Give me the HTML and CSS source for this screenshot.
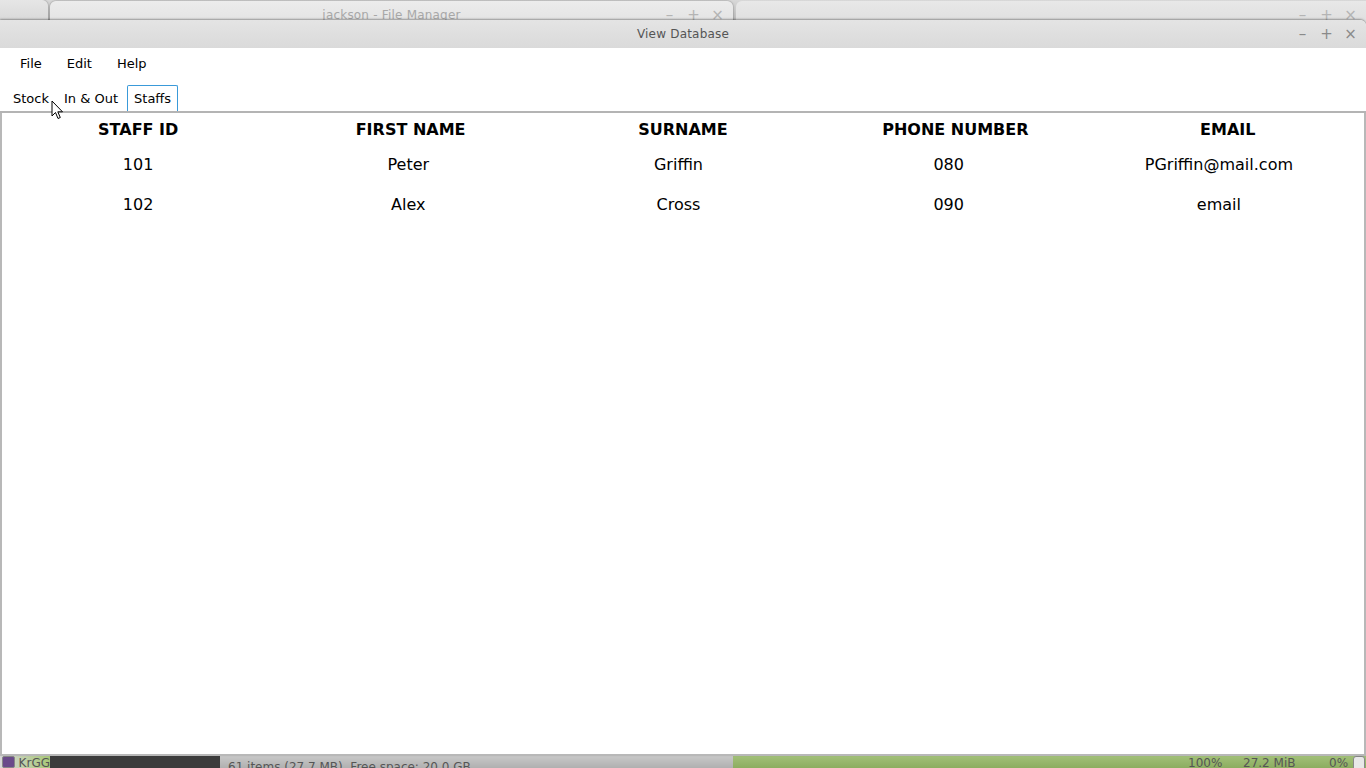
FILE: index.html
```html
<!DOCTYPE html>
<html>
<head>
<meta charset="utf-8">
<title>View Database</title>
<link rel="stylesheet" href="styles.css">
</head>
<body>
<div class="desktop">
  <div class="bgwin bgwin-left"></div>
  <div class="bgwin bgwin-fm">
    <div class="bg-title">jackson - File Manager</div>
    <div class="ctrls bg-ctrls"><span>&#8211;</span><span>+</span><span>&#215;</span></div>
  </div>
  <div class="bgwin bgwin-right">
    <div class="ctrls bg-ctrls"><span>&#8211;</span><span>+</span><span>&#215;</span></div>
  </div>

  <div class="bottom-strip">
    <div class="bs-a"><span class="bs-icon"></span><span class="bs-text">KrGG</span></div>
    <div class="bs-b"></div>
    <div class="bs-c"><span class="bs-text">61 items (27.7 MB), Free space: 20.0 GB</span></div>
    <div class="bs-d">
      <span class="bs-text bs-p1">100%</span>
      <span class="bs-text bs-p2">27.2 MiB</span>
      <span class="bs-text bs-p3">0%</span>
      <span class="bs-scroll"></span>
    </div>
  </div>

  <div class="window">
    <div class="titlebar">
      <div class="title">View Database</div>
      <div class="ctrls main-ctrls"><span>&#8211;</span><span>+</span><span>&#215;</span></div>
    </div>
    <div class="menubar">
      <span class="menu">File</span>
      <span class="menu">Edit</span>
      <span class="menu">Help</span>
    </div>
    <div class="tabs">
      <span class="tab">Stock</span>
      <span class="tab">In &amp; Out</span>
      <span class="tab active">Staffs</span>
    </div>
    <div class="content">
      <div class="thead">
        <div>STAFF ID</div>
        <div>FIRST NAME</div>
        <div>SURNAME</div>
        <div>PHONE NUMBER</div>
        <div>EMAIL</div>
      </div>
      <div class="trow">
        <div>101</div>
        <div>Peter</div>
        <div>Griffin</div>
        <div>080</div>
        <div>PGriffin@mail.com</div>
      </div>
      <div class="trow">
        <div>102</div>
        <div>Alex</div>
        <div>Cross</div>
        <div>090</div>
        <div>email</div>
      </div>
    </div>
  </div>
  <svg class="cursor" width="14" height="20" viewBox="0 0 14 20">
    <path d="M1 1 L1 16 L4.5 12.5 L7 18.5 L9.3 17.5 L6.8 11.8 L11.5 11.8 Z" fill="#fff" stroke="#000" stroke-width="1"/>
  </svg>
</div>
</body>
</html>
```

FILE: styles.css
```css
html, body {
  margin: 0;
  padding: 0;
}
body {
  width: 1366px;
  height: 768px;
  overflow: hidden;
  font-family: "DejaVu Sans", sans-serif;
}
.desktop {
  position: relative;
  width: 1366px;
  height: 768px;
  background: linear-gradient(#d8d8d8, #bcbcbc 20px, #9cb878 21px);
  overflow: hidden;
}
.bgwin {
  position: absolute;
  top: 0;
  height: 60px;
  background: linear-gradient(#ececec, #e2e2e2 40%, #c9c9c9 100%);
  box-shadow: 0 0 2px rgba(0,0,0,0.45);
}
.bgwin-left {
  left: -10px;
  width: 58px;
  top: 0;
  border-top-right-radius: 6px;
  background: linear-gradient(#e6e6e6, #d0d0d0 60%, #b8b8b8);
}
.bgwin-fm {
  left: 50px;
  width: 683px;
  top: 1px;
  border-radius: 6px 6px 0 0;
}
.bgwin-right {
  left: 736px;
  width: 640px;
  top: 1px;
  border-radius: 6px 0 0 0;
  box-shadow: none;
  background: linear-gradient(#e8e8e8, #dedede 40%, #c6c6c6 100%);
}
.bg-title {
  position: absolute;
  left: 0;
  right: 0;
  top: 7px;
  text-align: center;
  font-size: 12px;
  color: #a8a8a8;
  letter-spacing: 0.2px;
}
.ctrls {
  position: absolute;
  display: flex;
  gap: 9px;
  font-size: 15px;
  line-height: 16px;
}
.ctrls span {
  width: 15px;
  text-align: center;
}
.bg-ctrls {
  top: 6px;
  right: 8px;
  color: #b4b4b4;
}
.bgwin-right .bg-ctrls {
  right: 18px;
}
.bottom-strip {
  position: absolute;
  left: 0;
  top: 756px;
  width: 1366px;
  height: 12px;
  display: flex;
}
.bottom-strip .bs-text {
  font-size: 12px;
  color: #555;
  position: relative;
  top: 0;
  white-space: nowrap;
}
.bs-a {
  width: 50px;
  background: linear-gradient(90deg, #d8d8d8, #a8c878);
  display: flex;
  gap: 4px;
  padding-left: 2px;
  box-sizing: border-box;
}
.bs-icon {
  width: 14px;
  height: 10px;
  background: #6a4a8a;
  border: 1px solid #888;
  border-radius: 2px;
}
.bs-b {
  width: 170px;
  background: #3c3c3c;
}
.bs-c {
  width: 513px;
  background: linear-gradient(#c8c8c8, #b0b0b0);
  padding-left: 8px;
  box-sizing: border-box;
}
.bs-d {
  flex: 1;
  background: linear-gradient(#a2c078, #8cad60);
  position: relative;
}
.bs-d .bs-text {
  position: absolute;
  top: 0;
}
.bs-p1 { left: 455px; }
.bs-p2 { left: 510px; }
.bs-p3 { left: 596px; }
.bs-scroll {
  position: absolute;
  right: 1px;
  top: 0;
  width: 10px;
  height: 14px;
  border: 1px solid #888;
  border-radius: 3px;
  background: #e8e8e8;
}
.window {
  position: absolute;
  left: 0;
  top: 20px;
  width: 1366px;
  height: 736px;
  display: flex;
  flex-direction: column;
  background: #fff;
  box-shadow: 0 -1px 2px rgba(0,0,0,0.35);
  border-top-right-radius: 6px;
}
.titlebar {
  position: relative;
  height: 28px;
  flex: none;
  background: linear-gradient(#e4e4e4, #dadada);
  border-top-right-radius: 6px;
}
.title {
  text-align: center;
  font-size: 12px;
  line-height: 28px;
  color: #555;
  letter-spacing: 0.2px;
}
.main-ctrls {
  top: 6px;
  right: 8px;
  color: #8a8a8a;
}
.menubar {
  height: 30px;
  flex: none;
  display: flex;
  align-items: center;
  padding-left: 13px;
  font-size: 13px;
  color: #000;
}
.menu {
  padding: 0 7px;
  margin-right: 11px;
}
.tabs {
  flex: none;
  display: flex;
  gap: 1px;
  padding-left: 6px;
  margin-top: 7px;
  height: 26px;
  font-size: 13px;
  border-bottom: 2px solid #b4b4b4;
  position: relative;
}
.tab {
  padding: 0 6px;
  line-height: 25px;
  border: 1px solid transparent;
  border-bottom: none;
  border-radius: 2px 2px 0 0;
}
.tab.active {
  border-color: #3a9ad9;
  margin-left: 1px;
}
.content {
  flex: 1;
  border-left: 2px solid #b8b8b8;
  border-right: 2px solid #b8b8b8;
  border-bottom: 2px solid #b8b8b8;
  background: #fff;
}
.thead, .trow {
  display: grid;
  grid-template-columns: repeat(5, 1fr);
  text-align: center;
  color: #000;
}
.thead {
  height: 32px;
  line-height: 34px;
  font-weight: bold;
  font-size: 16px;
}
.trow {
  height: 40px;
  line-height: 40px;
  font-size: 16px;
  padding-left: 1px;
  padding-right: 10px;
}
.cursor {
  position: absolute;
  left: 51px;
  top: 100px;
}
```
